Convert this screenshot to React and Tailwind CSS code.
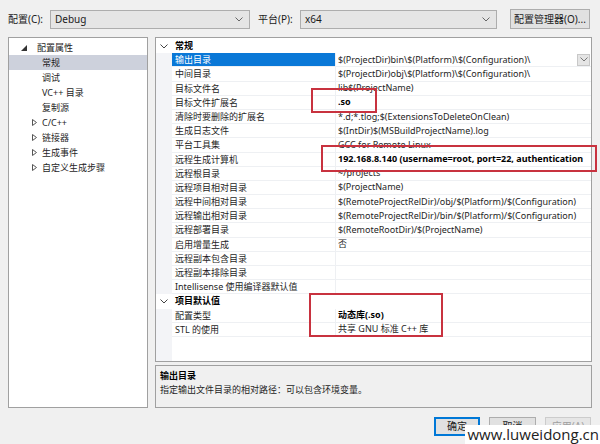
import React from "react";

const FONT = { fontFamily: '"Noto Sans", "Noto Sans CJK SC", sans-serif' };

// 属性网格里的行
const general = [
  { name: "输出目录", value: "$(ProjectDir)bin\\$(Platform)\\$(Configuration)\\", selected: true },
  { name: "中间目录", value: "$(ProjectDir)obj\\$(Platform)\\$(Configuration)\\" },
  { name: "目标文件名", value: "lib$(ProjectName)" },
  { name: "目标文件扩展名", value: ".so", bold: true },
  { name: "清除时要删除的扩展名", value: "*.d;*.tlog;$(ExtensionsToDeleteOnClean)" },
  { name: "生成日志文件", value: "$(IntDir)$(MSBuildProjectName).log" },
  { name: "平台工具集", value: "GCC for Remote Linux" },
  { name: "远程生成计算机", value: "192.168.8.140 (username=root, port=22, authentication", bold: true },
  { name: "远程根目录", value: "~/projects" },
  { name: "远程项目相对目录", value: "$(ProjectName)" },
  { name: "远程中间相对目录", value: "$(RemoteProjectRelDir)/obj/$(Platform)/$(Configuration)" },
  { name: "远程输出相对目录", value: "$(RemoteProjectRelDir)/bin/$(Platform)/$(Configuration)" },
  { name: "远程部署目录", value: "$(RemoteRootDir)/$(ProjectName)" },
  { name: "启用增量生成", value: "否" },
  { name: "远程副本包含目录", value: "" },
  { name: "远程副本排除目录", value: "" },
  { name: "Intellisense 使用编译器默认值", value: "" },
];

const defaults = [
  { name: "配置类型", value: "动态库(.so)", bold: true },
  { name: "STL 的使用", value: "共享 GNU 标准 C++ 库" },
];

const tree = [
  { label: "常规", selected: true },
  { label: "调试" },
  { label: "VC++ 目录" },
  { label: "复制源" },
  { label: "C/C++", arrow: true },
  { label: "链接器", arrow: true },
  { label: "生成事件", arrow: true },
  { label: "自定义生成步骤", arrow: true },
];

function Chevron({ className = "" }) {
  return (
    <svg width="8" height="5" viewBox="0 0 8 5" className={className}>
      <path d="M0.5 0.5 L4 4 L7.5 0.5" fill="none" stroke="currentColor" strokeWidth="1" />
    </svg>
  );
}

function Combo({ text, width }) {
  return (
    <div className={`${width} h-[19px] bg-[#e5e5e5] border border-[#adadad] flex items-center justify-between pl-[4px] pr-[6px] text-[10px] text-[#1a1a1a]`}>
      <span>{text}</span>
      <Chevron className="text-[#666]" />
    </div>
  );
}

function Row({ row }) {
  return (
    <div className="flex h-[14.2px] leading-[14px]">
      <div className="w-[16px] shrink-0 bg-[#f3f4f7]" />
      <div
        className={`w-[163px] shrink-0 pl-[3px] truncate border-b border-[#eef0f3] ${
          row.selected ? "bg-[#0a78d7] text-white" : "text-[#1e1e1e]"
        }`}
      >
        {row.name}
      </div>
      <div className="flex-1 min-w-0 flex items-center border-b border-l border-[#eef0f3] pl-[2px] whitespace-nowrap overflow-hidden">
        <span className={`flex-1 overflow-hidden ${row.bold ? "font-bold text-black" : "text-[#1e1e1e]"}`}>{row.value}</span>
        {row.selected && (
          <div className="w-[13px] h-[12px] mr-[1px] shrink-0 bg-[#e5e5e5] border border-[#c8c8c8] flex items-center justify-center text-[#777]">
            <Chevron />
          </div>
        )}
      </div>
    </div>
  );
}

function Category({ title }) {
  return (
    <div className="flex h-[14.2px] leading-[14px] items-center">
      <div className="w-[16px] shrink-0 flex justify-center text-[#444]">
        <Chevron />
      </div>
      <div className="pl-[3px] font-bold text-black">{title}</div>
    </div>
  );
}

export default function App() {
  return (
    <div className="w-[600px] h-[444px] bg-[#f0f0f0] relative overflow-hidden text-[9px]" style={FONT}>
      {/* 顶部：配置 / 平台 */}
      <div className="flex items-center pt-[9px] px-[8px] text-[10px] text-[#1a1a1a]">
        <span className="w-[42px]">配置(C):</span>
        <Combo text="Debug" width="w-[200px]" />
        <span className="w-[42px] ml-[8px]">平台(P):</span>
        <Combo text="x64" width="w-[197px]" />
        <div className="ml-[13px] w-[80px] h-[20px] bg-[#e1e1e1] border border-[#adadad] flex items-center justify-center">
          配置管理器(O)...
        </div>
      </div>

      <div className="flex gap-[7px] px-[8px] mt-[8px]">
        {/* 左侧树 */}
        <div className="w-[140px] h-[371px] bg-white border border-[#a0a0a0] pt-[2px] text-[#1e1e1e]">
          <div className="h-[15px] leading-[15px] flex items-center">
            <svg width="6" height="6" viewBox="0 0 6 6" className="ml-[12px]">
              <path d="M6 0 L6 6 L0 6 Z" fill="#333" />
            </svg>
            <span className="ml-[10px]">配置属性</span>
          </div>
          {tree.map((t) => (
            <div
              key={t.label}
              className={`h-[15px] leading-[15px] flex items-center ${t.selected ? "bg-[#cdd1dc]" : ""}`}
            >
              <div className="w-[33px] shrink-0 flex justify-end pr-[5px]">
                {t.arrow && (
                  <svg width="5" height="7" viewBox="0 0 5 7">
                    <path d="M0.5 0.5 L4.5 3.5 L0.5 6.5 Z" fill="none" stroke="#555" strokeWidth="1" />
                  </svg>
                )}
              </div>
              <span>{t.label}</span>
            </div>
          ))}
        </div>

        {/* 右侧属性网格 */}
        <div className="w-[437px] flex flex-col">
          <div className="h-[325px] bg-white border border-[#a0a0a0] flex flex-col pt-[1px]">
            <Category title="常规" />
            {general.map((r) => (
              <Row key={r.name} row={r} />
            ))}
            <Category title="项目默认值" />
            {defaults.map((r) => (
              <Row key={r.name} row={r} />
            ))}
            <div className="flex-1 flex">
              <div className="w-[16px] bg-[#f3f4f7]" />
            </div>
          </div>
          <div className="h-[43px] mt-[3px] border border-[#a0a0a0] bg-[#f0f0f0] px-[4px] pt-[3px] leading-[14px] text-[#1e1e1e]">
            <div className="font-bold text-black">输出目录</div>
            <div>指定输出文件目录的相对路径：可以包含环境变量。</div>
          </div>
        </div>
      </div>

      {/* 底部按钮 */}
      <div className="flex justify-end gap-[9px] pr-[9px] mt-[9px] text-[10px]">
        <div className="w-[46px] h-[19px] bg-[#e1e1e1] border-2 border-[#0078d7] flex items-center justify-center text-[#1a1a1a]">
          确定
        </div>
        <div className="w-[47px] h-[19px] bg-[#e1e1e1] border border-[#adadad] flex items-center justify-center text-[#1a1a1a]">
          取消
        </div>
        <div className="w-[46px] h-[19px] bg-[#e6e6e6] border border-[#cccccc] flex items-center justify-center text-[#a0a0a0]">
          应用(A)
        </div>
      </div>

      {/* 标注红框 */}
      <div className="absolute left-[311px] top-[88px] w-[66px] h-[25px] border-2 border-[#c8323f]" />
      <div className="absolute left-[321px] top-[145px] w-[276px] h-[27px] border-2 border-[#c8323f]" />
      <div className="absolute left-[309px] top-[293px] w-[134px] h-[44px] border-2 border-[#c8323f]" />

      {/* 水印 */}
      <div className="absolute right-0 bottom-0 bg-white pl-[3px] pr-[1px] h-[19px] leading-[19px] text-[15px] text-[#222]" style={{ fontFamily: '"Open Sans", "Liberation Sans", sans-serif' }}>
        www.luweidong.cn
      </div>
    </div>
  );
}
